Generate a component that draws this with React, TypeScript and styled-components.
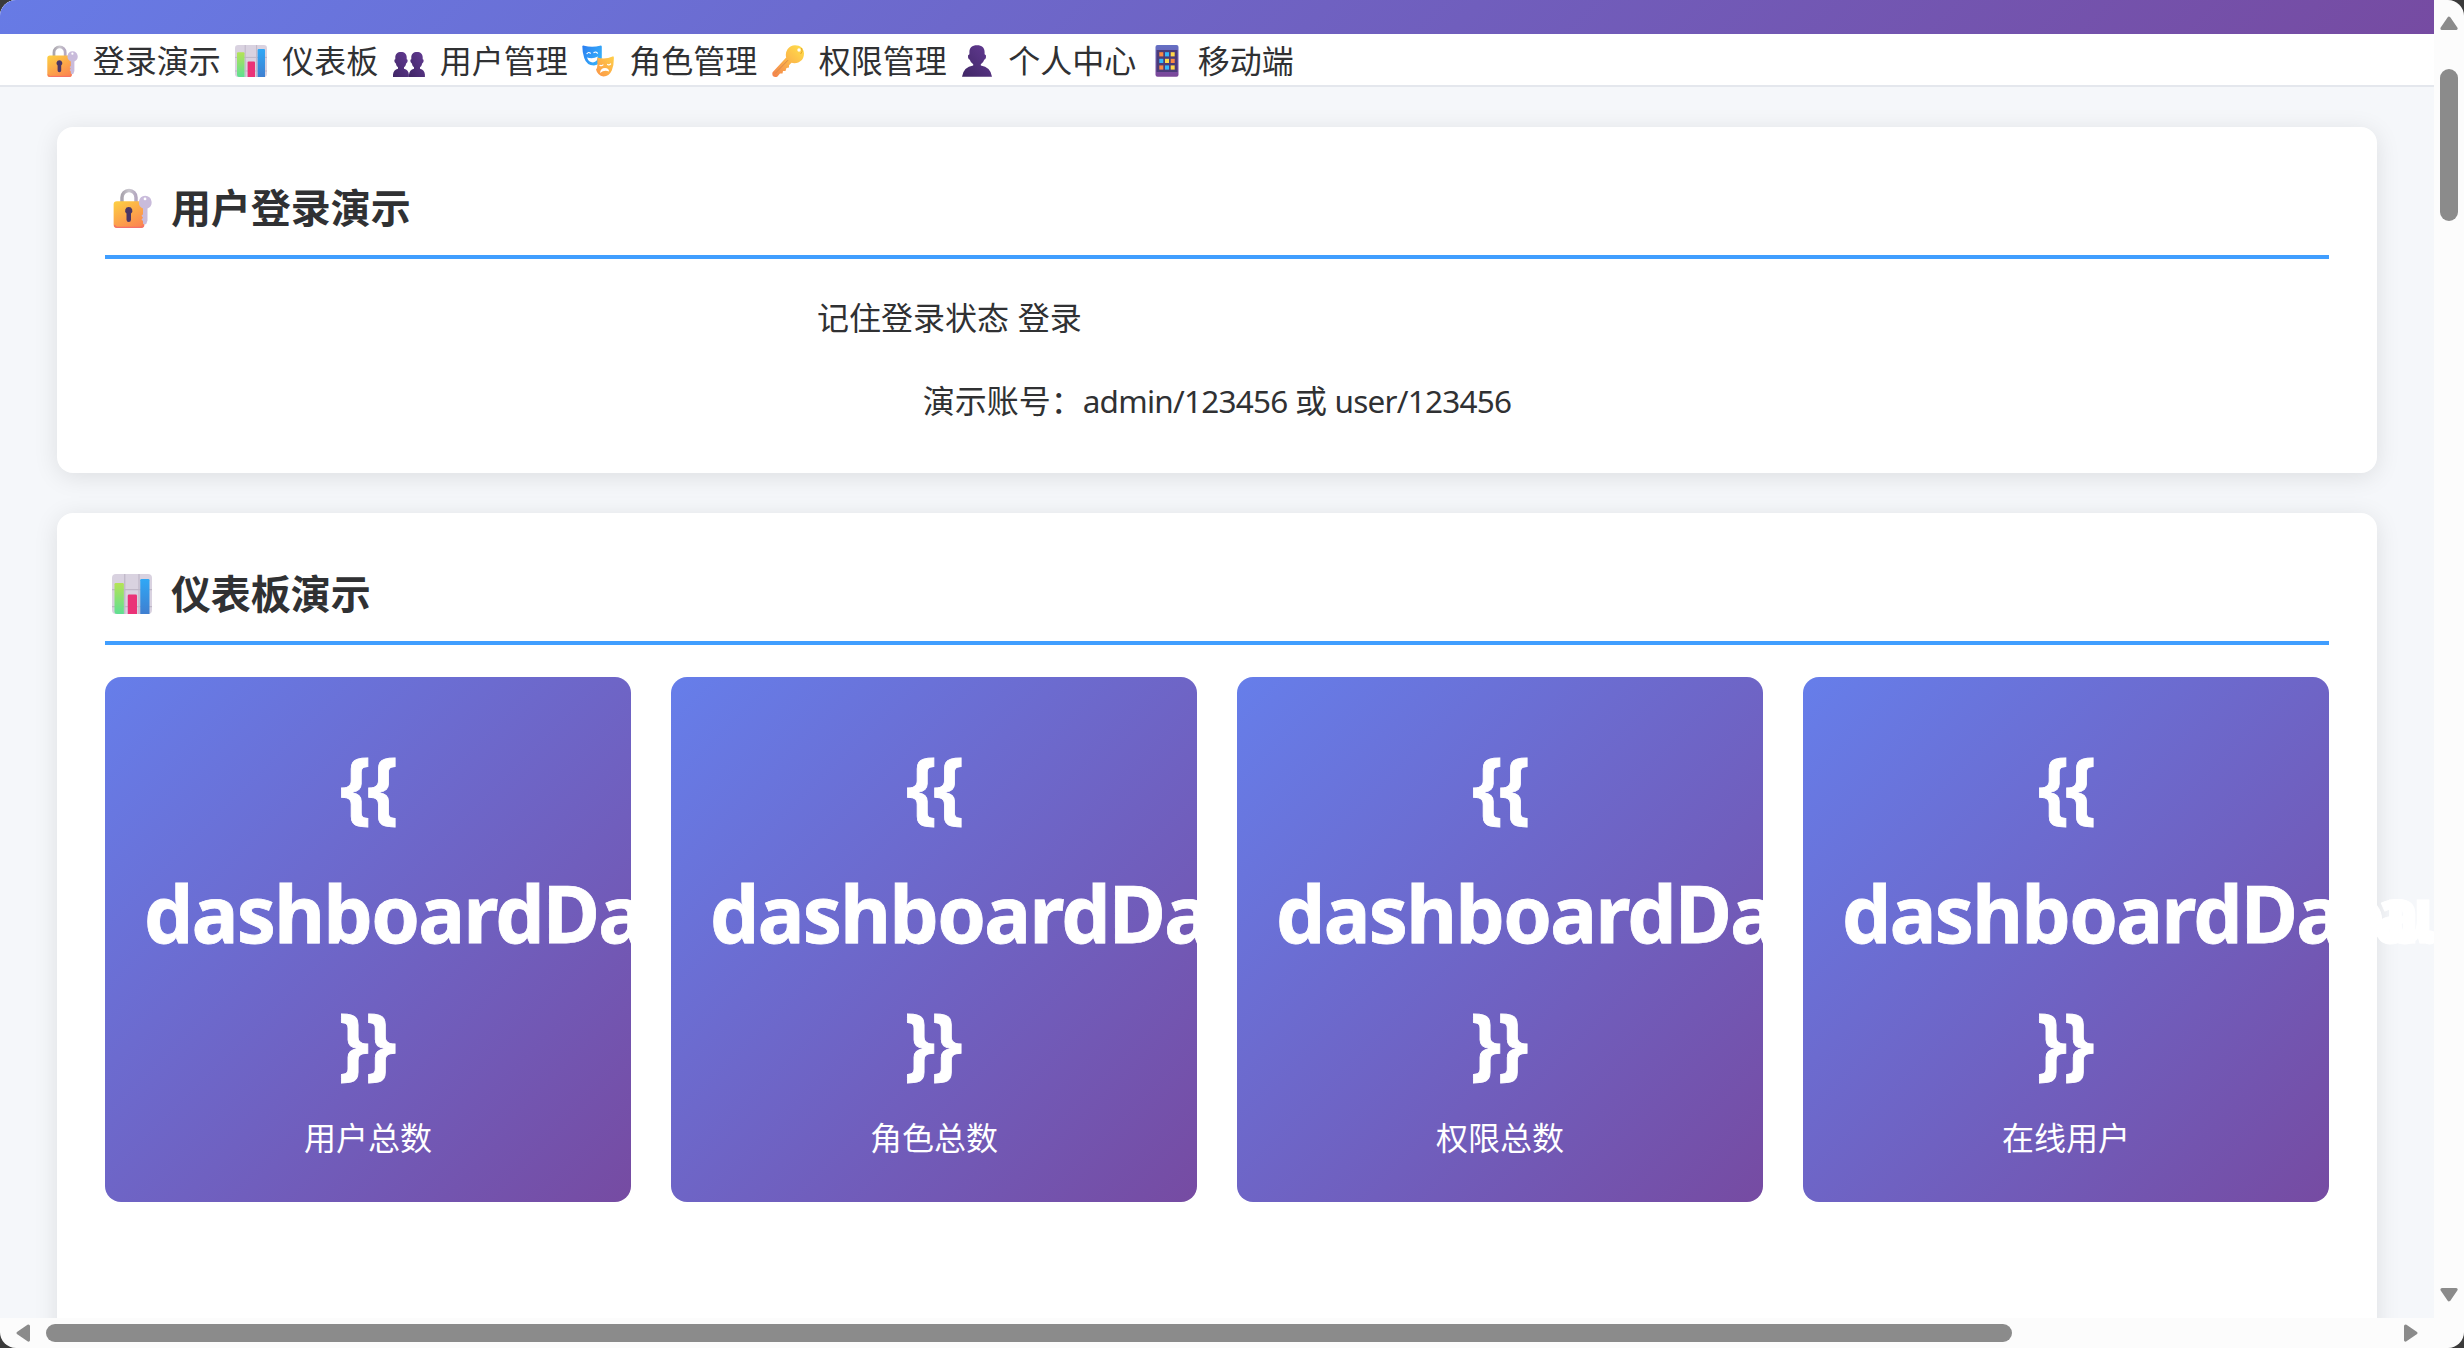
import React from 'react';
import styled, { createGlobalStyle } from 'styled-components';

const GlobalStyle = createGlobalStyle`
  * { box-sizing: border-box; margin: 0; padding: 0; }
  html, body { background: #3a3a3a; overflow: hidden; }
  body {
    font-family: 'Noto Sans CJK SC', 'Noto Sans', sans-serif;
    font-size: 32px;
    line-height: 1.6;
    color: #303133;
  }
`;

const Window = styled.div`
  display: grid;
  grid-template-columns: 1fr 30px;
  grid-template-rows: 1fr 30px;
  width: 2464px;
  height: 1348px;
  border-radius: 16px;
  overflow: hidden;
  background: #fcfcfc;
`;

const Viewport = styled.div`
  background: #f5f7fa;
  overflow: hidden;
  min-width: 0;
  min-height: 0;
`;

const Header = styled.header`
  height: 34px;
  background: linear-gradient(135deg, #667eea 0%, #764ba2 100%) bottom / 100% 200px no-repeat;
`;

const Nav = styled.nav`
  display: flex;
  gap: 8.8px;
  height: 53px;
  padding: 0 40px;
  background: #fff;
  border-bottom: 2px solid #e4e7ed;
`;

const NavItem = styled.a`
  display: flex;
  align-items: center;
  gap: 8.8px;
  white-space: nowrap;
  line-height: 51px;
`;

const EmojiBox = styled.span<{ $size: number }>`
  display: inline-flex;
  justify-content: center;
  align-items: center;
  flex: none;
  width: ${(p) => p.$size * 1.372}px;
  padding-top: 2px;
  svg {
    width: ${(p) => p.$size}px;
    height: ${(p) => p.$size}px;
  }
`;

const Main = styled.main`
  display: flex;
  flex-direction: column;
  gap: 40px;
  width: 2400px;
  margin: 0 auto;
  padding: 40px;
`;

const Card = styled.section<{ $minHeight?: number }>`
  flex: none;
  min-height: ${(p) => p.$minHeight ?? 0}px;
  padding: 48px;
  background: #fff;
  border-radius: 16px;
  box-shadow: 0 4px 24px rgba(0, 0, 0, 0.1);
`;

const CardTitle = styled.h2`
  display: flex;
  align-items: center;
  gap: 11px;
  height: 84px;
  margin-bottom: 32px;
  padding-bottom: 16px;
  border-bottom: 4px solid #409eff;
  font-size: 40px;
  font-weight: 700;
  line-height: 64px;
`;

const TitleText = styled.span`
  padding-bottom: 2px;
  line-height: 62px;
`;

const LoginForm = styled.div`
  width: 800px;
  margin: 0 auto;
  line-height: 51px;
`;

const FormRow = styled.div`
  display: flex;
  gap: 8.8px;
`;

const Hint = styled.div`
  margin-top: 32px;
  text-align: center;
  white-space: nowrap;
`;

const Latin = styled.span`
  font-family: 'Noto Sans', 'Open Sans', sans-serif;
  font-size: 31.5px;
  letter-spacing: -0.75px;
  line-height: 1;
`;

const StatGrid = styled.div`
  display: grid;
  grid-template-columns: repeat(4, 1fr);
  gap: 40px;
`;

const StatCard = styled.div`
  position: relative;
  min-width: 0;
  height: 525px;
  padding: 44px 40px 36px;
  border-radius: 16px;
  background: linear-gradient(135deg, #667eea 0%, #764ba2 100%);
  color: #fff;
  text-align: center;
`;

const StatValue = styled.div`
  margin: 0 0 6px -1px;
  font-family: 'Noto Sans', 'Open Sans', sans-serif;
  font-size: 78px;
  font-weight: 700;
  line-height: 128px;
  letter-spacing: -1.6px;
  -webkit-text-stroke: 0.8px #fff;
`;

const Brace = styled.span<{ $closing?: boolean }>`
  margin-left: ${(p) => (p.$closing ? -4 : 0)}px;
  letter-spacing: -3.6px;
`;

const StatLabel = styled.div`
  line-height: 51px;
`;

const VTrack = styled.div`
  display: flex;
  flex-direction: column;
  align-items: center;
  padding: 16px 0;
`;

const HTrack = styled.div`
  display: flex;
  align-items: center;
  padding: 0 16px;
`;

const VThumb = styled.div`
  width: 18px;
  height: 152px;
  margin-top: 39px;
  margin-bottom: auto;
  border-radius: 9px;
  background: #8b8b8b;
`;

const HThumb = styled.div`
  width: 1966px;
  height: 18px;
  margin-left: 16px;
  margin-right: auto;
  border-radius: 9px;
  background: #8b8b8b;
`;

const ArrowSvg = styled.svg`
  flex: none;
`;

const Arrow = ({ dir }: { dir: 'up' | 'down' | 'left' | 'right' }) => {
  const vertical = dir === 'up' || dir === 'down';
  const d = {
    up: 'M2 12.4L9 2.2L16 12.4Z',
    down: 'M2 1.6L9 11.8L16 1.6Z',
    left: 'M12.4 2L2.2 9L12.4 16Z',
    right: 'M1.6 2L11.8 9L1.6 16Z',
  }[dir];
  return (
    <ArrowSvg width={vertical ? 18 : 14} height={vertical ? 14 : 18}>
      <path d={d} fill="#8b8b8b" stroke="#8b8b8b" strokeWidth="3.2" strokeLinejoin="round" />
    </ArrowSvg>
  );
};

const DefsSvg = styled.svg`
  position: absolute;
`;

const Gradients = () => (
  <DefsSvg width="0" height="0">
    <defs>
      <linearGradient id="gold" x1="0.2" y1="0" x2="0.8" y2="1">
        <stop offset="0" stopColor="#fdcb43" />
        <stop offset="1" stopColor="#fb8450" />
      </linearGradient>
      <linearGradient id="steel" x1="0" y1="0" x2="1" y2="0">
        <stop offset="0" stopColor="#a9a4ad" />
        <stop offset="0.5" stopColor="#c9c6cd" />
        <stop offset="1" stopColor="#b4a8c0" />
      </linearGradient>
      <linearGradient id="green" x1="0" y1="0" x2="0" y2="1">
        <stop offset="0" stopColor="#b4e356" />
        <stop offset="1" stopColor="#5fdf92" />
      </linearGradient>
      <linearGradient id="blue" x1="0" y1="0" x2="0" y2="1">
        <stop offset="0" stopColor="#2fa8f6" />
        <stop offset="1" stopColor="#3f7fd0" />
      </linearGradient>
      <linearGradient id="violet" x1="0" y1="1" x2="1" y2="0">
        <stop offset="0" stopColor="#3f2665" />
        <stop offset="1" stopColor="#643b94" />
      </linearGradient>
      <linearGradient id="maskBlue" x1="0" y1="0" x2="1" y2="0.6">
        <stop offset="0" stopColor="#2b7df0" />
        <stop offset="1" stopColor="#35b0fb" />
      </linearGradient>
      <linearGradient id="maskGold" x1="1" y1="0" x2="0" y2="1">
        <stop offset="0" stopColor="#ffd04a" />
        <stop offset="1" stopColor="#fb9447" />
      </linearGradient>
      <linearGradient id="keyGold" x1="1" y1="0" x2="0" y2="1">
        <stop offset="0" stopColor="#ffe14a" />
        <stop offset="0.45" stopColor="#fcba4a" />
        <stop offset="1" stopColor="#f3804e" />
      </linearGradient>
      <linearGradient id="phone" x1="0" y1="0" x2="0" y2="1">
        <stop offset="0" stopColor="#6470c4" />
        <stop offset="1" stopColor="#7c4699" />
      </linearGradient>
    </defs>
  </DefsSvg>
);

const Lock = () => (
  <svg viewBox="0 0 32 32">
    <path d="M8 13V7.500a5.600 5.600 0 0 1 11.200 0V13" fill="none" stroke="url(#steel)" strokeWidth="2.8" />
    <rect x="1.3" y="10.5" width="24.6" height="21.5" rx="2.6" fill="url(#gold)" />
    <path d="M2 29.600q.4 1.800 2.200 1.800h18.600q2 0 2.500-1.800" fill="none" stroke="#f4706a" strokeWidth="1" />
    <path d="M13.400 15.200a2.900 2.900 0 0 1 1.800 5.200v5a1.800 1.800 0 0 1-3.600 0v-5a2.900 2.900 0 0 1 1.800-5.200z" fill="#4a3665" />
    <path d="M26.500 6.200a5.300 5.300 0 0 1 1.900 10.200V26l-1 2.800q-1.400.8-2.600-.2v-2.200l-1.200-1.300 1.200-1.400-1.200-1.600 1.200-1.200v-4.500A5.300 5.300 0 0 1 26.500 6.200z" fill="#c9bbdb" />
    <circle cx="26.400" cy="8.700" r="1.100" fill="#fff" />
  </svg>
);

const Chart = () => (
  <svg viewBox="0 0 32 32">
    <rect width="32" height="32" rx="3.2" fill="#d9d2e0" />
    <path d="M10.200 0V32M21.600 0V32M0 12.400H32M0 26H32" stroke="#bfb7c7" strokeWidth="1" />
    <path d="M2 8.200Q2 7.200 3 7.200H8.500Q9.500 7.200 9.500 8.200V32H4Q2 32 2 30z" fill="url(#green)" />
    <path d="M12.600 17.400Q12.600 16.400 13.600 16.400H19Q20 16.400 20 17.400V32H12.600z" fill="#ea3277" />
    <path d="M22.600 5Q22.600 4 23.600 4H29Q30 4 30 5V32H22.600z" fill="url(#blue)" />
  </svg>
);

const bust = 'M8 7C11.600 7 13.700 9 13.700 12.600V14.200Q15 14.400 14.600 16.300Q14.300 18 13.300 18.200Q12.700 21 11 22.300V23.800Q15.600 25 15.900 29.500V32H0V29.500Q.4 25 5 23.800V22.300Q3.300 21 2.700 18.200Q1.700 18 1.400 16.300Q1 14.400 2.300 14.200V12.600C2.300 9 4.400 7 8 7z';

const People = () => (
  <svg viewBox="0 0 32 32">
    <path d={bust} fill="url(#violet)" />
    <path d={bust} transform="translate(16 0)" fill="url(#violet)" />
  </svg>
);

const Masks = () => (
  <svg viewBox="0 0 32 32">
    <path d="M.3 1Q1 0 2.200.7Q10 3 18 .7Q19.500.2 19.800 1.500V13Q18.500 19.500 12 20.600Q4.500 20.300 2.200 13Q.2 6 .3 1z" fill="url(#maskBlue)" />
    <path d="M5 8.600q1.600-2 3.400-.4M12 7.600q2-1.400 3.400.6" fill="none" stroke="#fff" strokeWidth="1.200" strokeLinecap="round" />
    <path d="M5 12.400Q10.600 14.400 15.800 11.600Q15.600 17 11 17.400Q6.600 17.200 5 12.400z" fill="#fff" />
    <path d="M15.300 12.500Q23 15 30.600 11.400Q32 11 31.900 13Q32 20 29.800 25.500Q27 31.500 21.400 31.400Q15.500 30.500 14 24.500Q15.400 23 15.400 20z" fill="url(#maskGold)" />
    <path d="M18 20.400q1.600.8 3-.6M25.600 19.400q1.600 1 3-.4" fill="none" stroke="#fff" strokeWidth="1.200" strokeLinecap="round" />
    <path d="M18 28Q18.500 23 23 23Q27 23 27 26.600Q22.500 24.600 18 28z" fill="#fff" />
  </svg>
);

const Key = () => (
  <svg viewBox="0 0 32 32">
    <path d="M23 .2C28.500.2 32 3.500 32 8.600C32 14.500 28 18.200 22.500 18.200Q20.600 18.200 19.500 17.800L17 20.300V22.600L14.500 23L13.500 26H11L10.500 28.500H8L5.500 31.400Q3.500 32.500 1.500 31.600Q-.3 30 .6 27.300L14.200 12.600Q13 8 15.500 4.200Q18.500.3 23 .2z" fill="url(#keyGold)" />
    <path d="M3.200 28.400L16 15.200" stroke="#d98a4c" strokeWidth="1" />
    <circle cx="27" cy="5" r="1.700" fill="#fff" />
    <path d="M29.600 3Q31 7 28.600 9" fill="none" stroke="#e5a526" strokeWidth="1" />
  </svg>
);

const Person = () => (
  <svg viewBox="0 0 32 32">
    <path d="M16 .2C21 .2 23.600 2.600 23.600 7V9.300Q25.500 9.800 25 12.200Q24.600 14.400 23.200 14.700Q22.400 17.700 19.800 19.200V20.600Q29.500 22 31 31.700H1Q2.500 22 12.200 20.600V19.200Q9.600 17.700 8.800 14.700Q7.400 14.400 7 12.200Q6.500 9.800 8.400 9.300V7C8.400 2.600 11 .2 16 .2z" fill="url(#violet)" />
  </svg>
);

const keypad = ['#fb8a44', '#35b6fa', '#ffd84a', '#35b6fa', '#ffd84a', '#fb8a44', '#fb8a44', '#35b6fa', '#ffd84a'];

const Phone = () => (
  <svg viewBox="0 0 32 32">
    <rect x="4.500" y="0" width="23" height="31.700" rx="2" fill="url(#phone)" />
    <rect x="5.600" y="5" width="20.800" height="22" fill="#4a3b78" />
    {keypad.map((c, i) => (
      <rect key={i} x={8.3 + (i % 3) * 5.7} y={7.2 + Math.floor(i / 3) * 6.6} width="4" height="4.200" fill={c} />
    ))}
  </svg>
);

const navItems = [
  { icon: Lock, label: '登录演示' },
  { icon: Chart, label: '仪表板' },
  { icon: People, label: '用户管理' },
  { icon: Masks, label: '角色管理' },
  { icon: Key, label: '权限管理' },
  { icon: Person, label: '个人中心' },
  { icon: Phone, label: '移动端' },
];

const stats = [
  { value: 'dashboardData.userCount', label: '用户总数' },
  { value: 'dashboardData.roleCount', label: '角色总数' },
  { value: 'dashboardData.permissionCount', label: '权限总数' },
  { value: 'dashboardData.onlineUsers', label: '在线用户' },
];

export default function App() {
  return (
    <>
      <GlobalStyle />
      <Gradients />
      <Window>
        <Viewport>
          <Header />
          <Nav>
            {navItems.map(({ icon: Icon, label }) => (
              <NavItem key={label}>
                <EmojiBox $size={32}><Icon /></EmojiBox>
                {label}
              </NavItem>
            ))}
          </Nav>
          <Main>
            <Card>
              <CardTitle>
                <EmojiBox $size={40}><Lock /></EmojiBox>
                <TitleText>用户登录演示</TitleText>
              </CardTitle>
              <LoginForm>
                <FormRow>
                  <span>记住登录状态</span>
                  <span>登录</span>
                </FormRow>
                <Hint>
                  演示账号：<Latin>admin/123456 </Latin>或<Latin> user/123456</Latin>
                </Hint>
              </LoginForm>
            </Card>
            <Card $minHeight={900}>
              <CardTitle>
                <EmojiBox $size={40}><Chart /></EmojiBox>
                <TitleText>仪表板演示</TitleText>
              </CardTitle>
              <StatGrid>
                {stats.map((s) => (
                  <StatCard key={s.label}>
                    <StatValue>
                      <Brace>{'{{'}</Brace> {s.value} <Brace $closing>{'}}'}</Brace>
                    </StatValue>
                    <StatLabel>{s.label}</StatLabel>
                  </StatCard>
                ))}
              </StatGrid>
            </Card>
          </Main>
        </Viewport>
        <VTrack>
          <Arrow dir="up" />
          <VThumb />
          <Arrow dir="down" />
        </VTrack>
        <HTrack>
          <Arrow dir="left" />
          <HThumb />
          <Arrow dir="right" />
        </HTrack>
      </Window>
    </>
  );
}
